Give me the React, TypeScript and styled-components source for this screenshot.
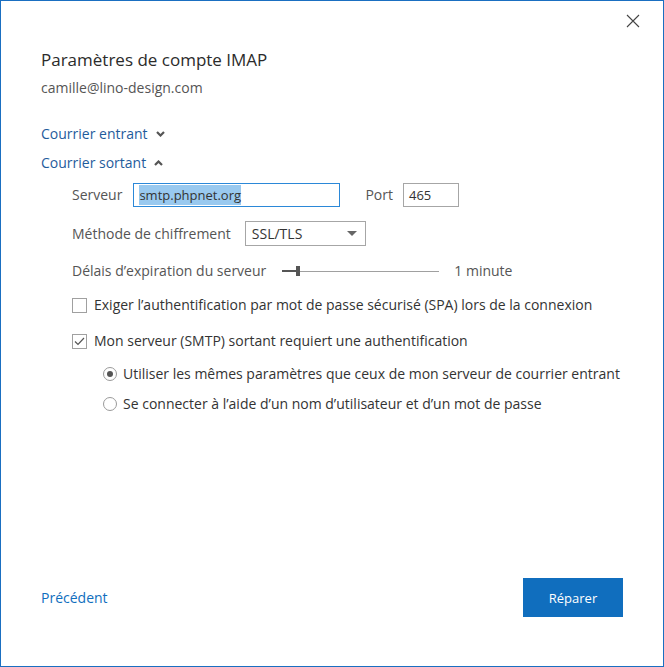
import React from "react";
import styled, { createGlobalStyle } from "styled-components";

const GlobalStyle = createGlobalStyle`
    html, body {
        margin: 0;
        padding: 0;
        background: #ffffff;
    }
    * {
        box-sizing: border-box;
    }
`;

const Window = styled.div`
    position: relative;
    width: 664px;
    height: 667px;
    border: 1px solid #1a6fc1;
    background: #ffffff;
    display: flex;
    flex-direction: column;
    font-family: "Open Sans", "Noto Sans", sans-serif;
    font-size: 14px;
    color: #333333;
`;

const TopBar = styled.div`
    height: 47px;
    display: flex;
    justify-content: flex-end;
    align-items: flex-start;
    padding: 13px 23px 0 0;
`;

const CloseButton = styled.button`
    width: 14px;
    height: 14px;
    padding: 0;
    border: none;
    background: none;
    display: flex;
    cursor: pointer;
`;

const Content = styled.div`
    padding: 0 40px;
    display: flex;
    flex-direction: column;
`;

const Title = styled.h1`
    margin: 0;
    font-size: 17px;
    font-weight: 400;
    line-height: 24px;
    color: #2b2b2b;
`;

const Email = styled.div`
    margin-top: 6px;
    line-height: 20px;
    color: #555555;
`;

const SectionToggle = styled.button<{ $first?: boolean }>`
    margin-top: ${(p) => (p.$first ? "26px" : "9px")};
    align-self: flex-start;
    padding: 0;
    border: none;
    background: none;
    font: inherit;
    line-height: 20px;
    color: #1f5c9c;
    display: flex;
    align-items: center;
    gap: 8px;
    cursor: pointer;
`;

const SubSection = styled.div`
    padding-left: 31px;
    display: flex;
    flex-direction: column;
`;

const Row = styled.div<{ $gap: number }>`
    margin-top: ${(p) => p.$gap}px;
    display: flex;
    align-items: center;
    color: #555555;
    line-height: 20px;
`;

const Label = styled.span<{ $space?: number; $before?: number }>`
    margin-left: ${(p) => p.$before ?? 0}px;
    margin-right: ${(p) => p.$space ?? 12}px;
`;

const TextBox = styled.div<{ $width: number; $focused?: boolean }>`
    width: ${(p) => p.$width}px;
    height: 24px;
    border: 1px solid ${(p) => (p.$focused ? "#2b88d8" : "#a6a6a6")};
    padding: 0 5px;
    display: flex;
    align-items: center;
    color: #333333;
    font-size: 13px;
`;

const Selected = styled.span`
    background: #99c9ef;
    line-height: 20px;
`;

const Select = styled.div`
    width: 121px;
    height: 25px;
    border: 1px solid #a6a6a6;
    padding: 0 8px 0 6px;
    display: flex;
    align-items: center;
    justify-content: space-between;
    color: #333333;
`;

const Caret = styled.span`
    width: 0;
    height: 0;
    border-left: 5px solid transparent;
    border-right: 5px solid transparent;
    border-top: 5px solid #666666;
`;

const Slider = styled.div`
    position: relative;
    width: 157px;
    height: 12px;
    margin-right: 15px;
`;

const Track = styled.div`
    position: absolute;
    left: 0;
    right: 0;
    top: 6px;
    height: 1px;
    background: #a0a0a0;
`;

const Filled = styled.div`
    position: absolute;
    left: 0;
    top: 5px;
    height: 2px;
    background: #555555;
`;

const Thumb = styled.div`
    position: absolute;
    top: 1px;
    width: 4px;
    height: 10px;
    background: #555555;
`;

const CheckRow = styled.label<{ $gap: number; $indent?: number }>`
    margin-top: ${(p) => p.$gap}px;
    margin-left: ${(p) => p.$indent ?? 0}px;
    display: flex;
    align-items: center;
    gap: 7px;
    color: #333333;
    line-height: 20px;
`;

const Box = styled.span`
    width: 15px;
    height: 15px;
    border: 1px solid #a0a0a0;
    display: flex;
    align-items: center;
    justify-content: center;
    flex-shrink: 0;
`;

const Radio = styled.span<{ $on?: boolean }>`
    width: 14px;
    height: 14px;
    margin-right: -1px;
    border: 1px solid #9a9a9a;
    border-radius: 50%;
    display: flex;
    align-items: center;
    justify-content: center;
    flex-shrink: 0;
    &::after {
        content: "";
        width: 6px;
        height: 6px;
        border-radius: 50%;
        background: ${(p) => (p.$on ? "#555555" : "transparent")};
    }
`;

const Footer = styled.div`
    margin-top: auto;
    padding: 0 40px 49px;
    display: flex;
    align-items: center;
    justify-content: space-between;
`;

const LinkButton = styled.button`
    padding: 0;
    border: none;
    background: none;
    font: inherit;
    color: #106ebe;
    cursor: pointer;
`;

const PrimaryButton = styled.button`
    width: 100px;
    height: 39px;
    border: none;
    background: #106ebe;
    color: #ffffff;
    font-family: inherit;
    font-size: 13px;
    cursor: pointer;
`;

const Chevron = ({ up }: { up?: boolean }) => (
    <svg width="9" height="6" viewBox="0 0 9 6">
        <path
            d={up ? "M1 5 L4.5 1.5 L8 5" : "M1 1 L4.5 4.5 L8 1"}
            fill="none"
            stroke="#555555"
            strokeWidth="2.2"
        />
    </svg>
);

const CheckMark = () => (
    <svg width="11" height="9" viewBox="0 0 11 9">
        <path d="M1 4.5 L4 7.5 L10 1" fill="none" stroke="#555555" strokeWidth="1.2" />
    </svg>
);

export default function App() {
    const timeout = 0.1;

    return (
        <>
            <GlobalStyle />
            <Window>
                <TopBar>
                    <CloseButton aria-label="Fermer">
                        <svg width="14" height="14" viewBox="0 0 14 14">
                            <path d="M1 1 L13 13 M13 1 L1 13" stroke="#444444" strokeWidth="1.1" />
                        </svg>
                    </CloseButton>
                </TopBar>
                <Content>
                    <Title>Paramètres de compte IMAP</Title>
                    <Email>camille@lino-design.com</Email>

                    <SectionToggle $first>
                        Courrier entrant <Chevron />
                    </SectionToggle>
                    <SectionToggle>
                        Courrier sortant <Chevron up />
                    </SectionToggle>

                    <SubSection>
                        <Row $gap={10}>
                            <Label $space={11}>Serveur</Label>
                            <TextBox $width={207} $focused>
                                <Selected>smtp.phpnet.org</Selected>
                            </TextBox>
                            <Label $before={25} $space={10}>
                                Port
                            </Label>
                            <TextBox $width={56}>465</TextBox>
                        </Row>
                        <Row $gap={14}>
                            <Label $space={14}>Méthode de chiffrement</Label>
                            <Select>
                                SSL/TLS
                                <Caret />
                            </Select>
                        </Row>
                        <Row $gap={15}>
                            <Label $space={16}>Délais d’expiration du serveur</Label>
                            <Slider>
                                <Track />
                                <Filled style={{ width: `${timeout * 157}px` }} />
                                <Thumb style={{ left: `${timeout * 157 - 2}px` }} />
                            </Slider>
                            <span>1 minute</span>
                        </Row>
                        <CheckRow $gap={14}>
                            <Box />
                            Exiger l’authentification par mot de passe sécurisé (SPA) lors de la connexion
                        </CheckRow>
                        <CheckRow $gap={16}>
                            <Box>
                                <CheckMark />
                            </Box>
                            Mon serveur (SMTP) sortant requiert une authentification
                        </CheckRow>
                        <CheckRow $gap={13} $indent={31}>
                            <Radio $on />
                            Utiliser les mêmes paramètres que ceux de mon serveur de courrier entrant
                        </CheckRow>
                        <CheckRow $gap={10} $indent={31}>
                            <Radio />
                            Se connecter à l’aide d’un nom d’utilisateur et d’un mot de passe
                        </CheckRow>
                    </SubSection>
                </Content>
                <Footer>
                    <LinkButton>Précédent</LinkButton>
                    <PrimaryButton>Réparer</PrimaryButton>
                </Footer>
            </Window>
        </>
    );
}
